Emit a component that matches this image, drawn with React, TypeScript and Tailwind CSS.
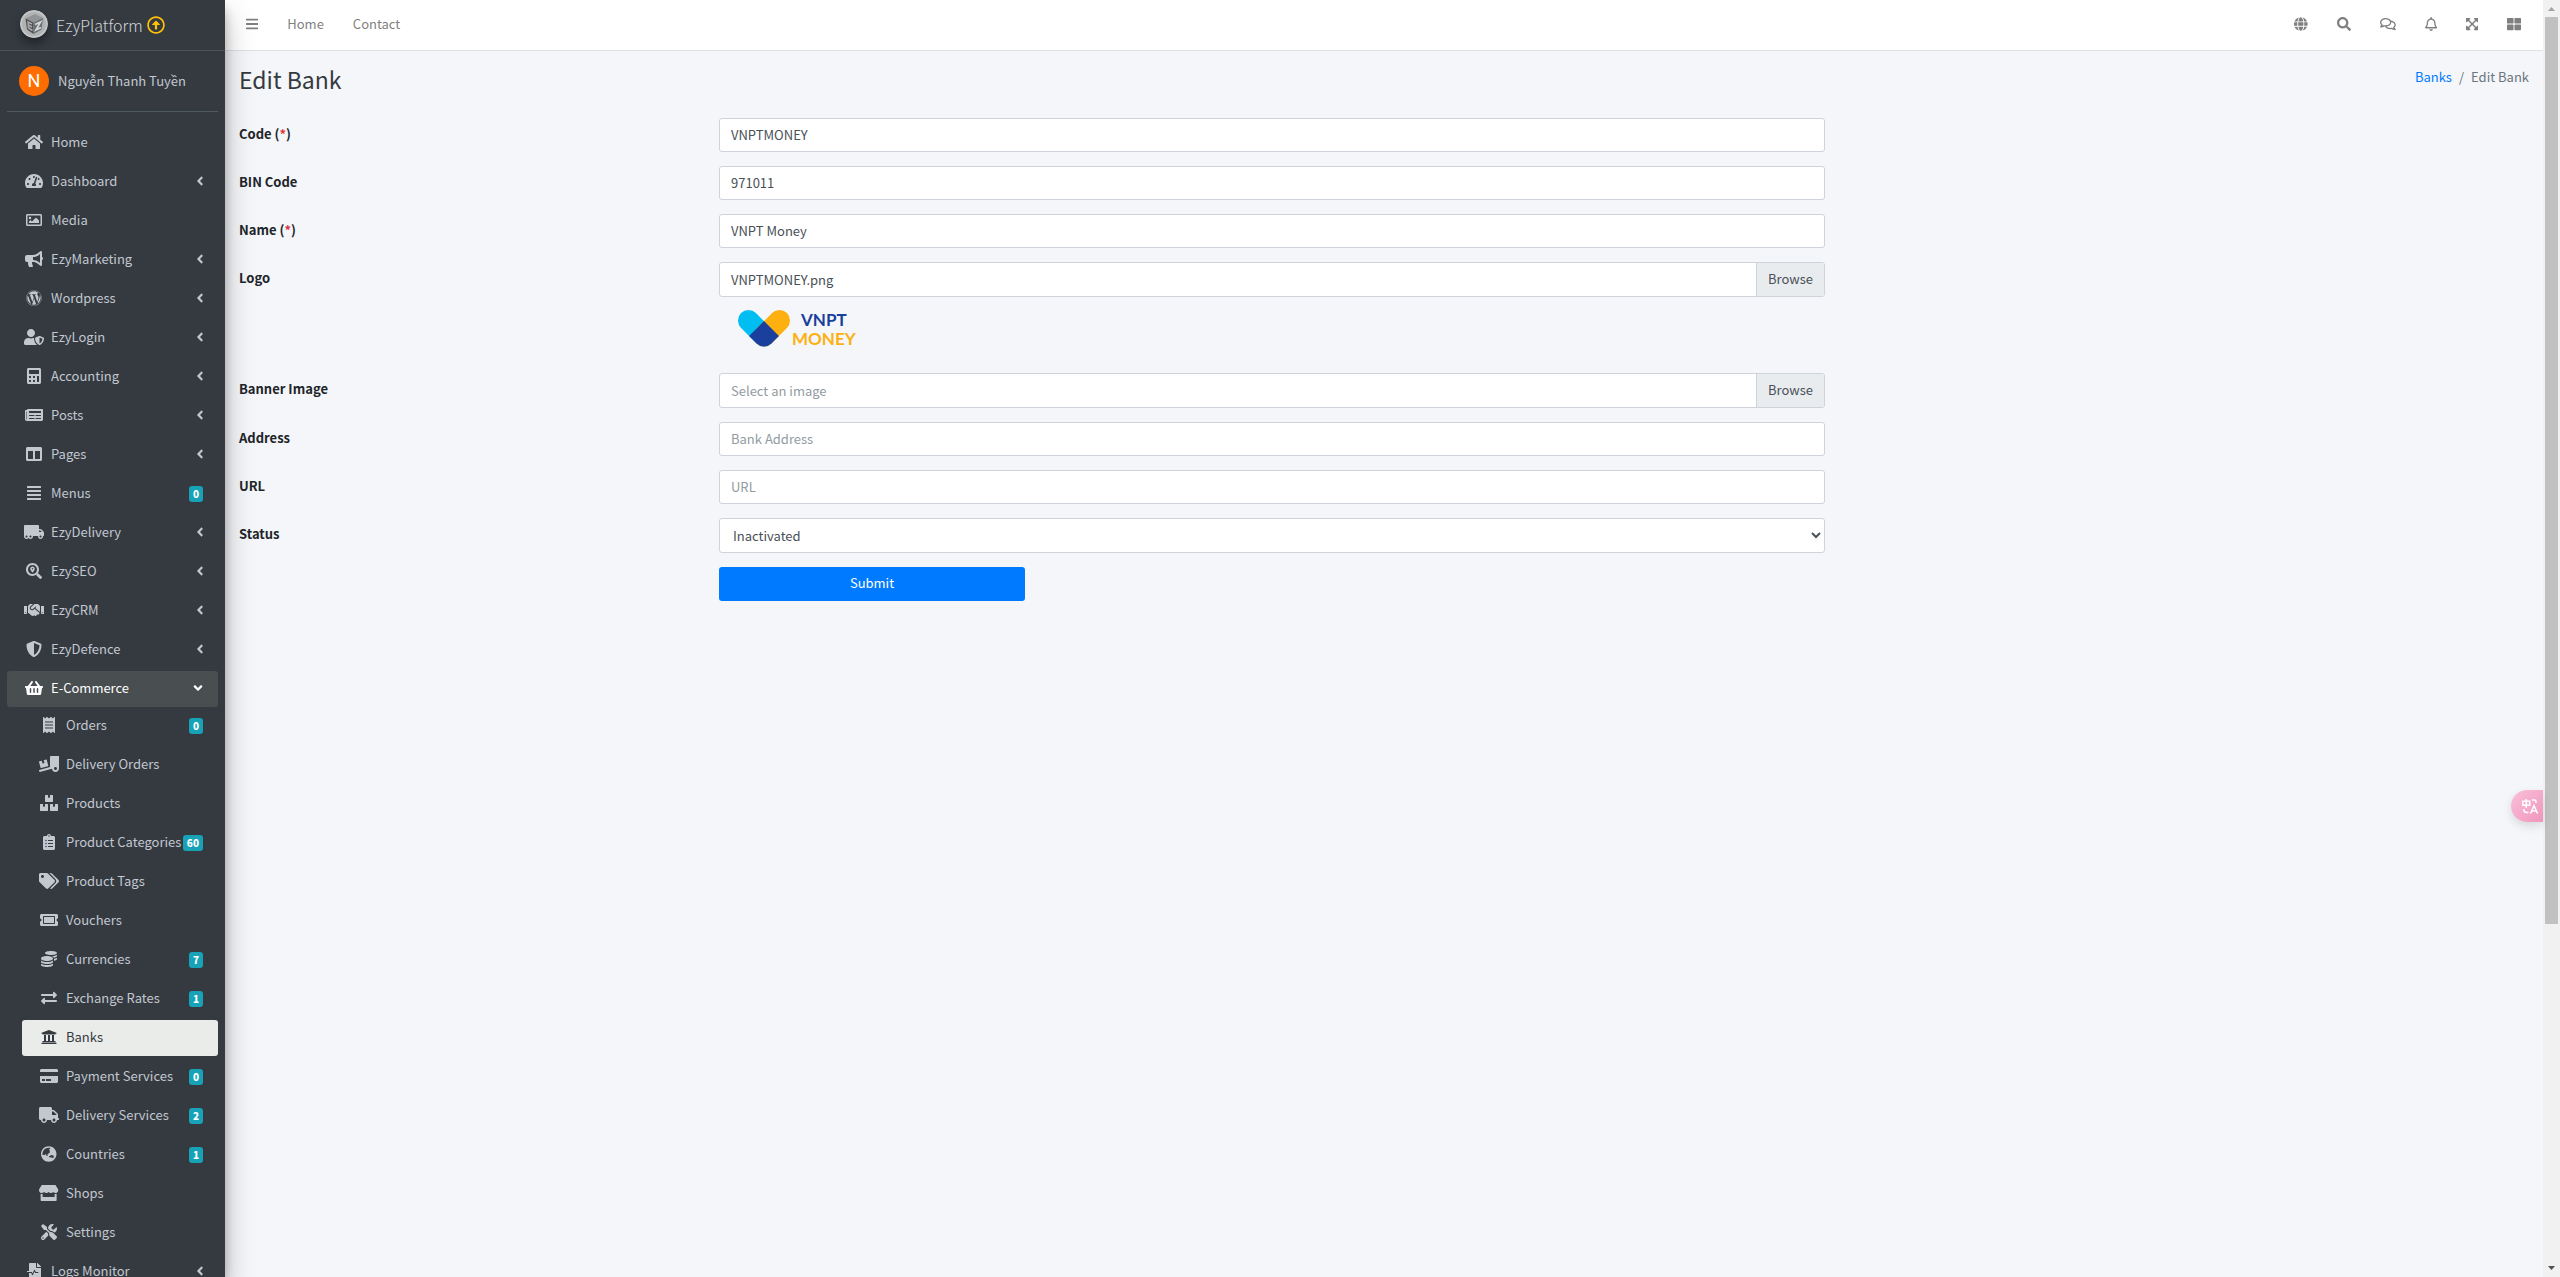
import React, { useState } from 'react';
import type { IconType } from 'react-icons';
import {
  FaAlignJustify,
  FaAngleDown,
  FaAngleLeft,
  FaBars,
  FaBoxes,
  FaBullhorn,
  FaCalculator,
  FaClipboardList,
  FaCoins,
  FaColumns,
  FaCreditCard,
  FaExchangeAlt,
  FaExpandArrowsAlt,
  FaFileMedicalAlt,
  FaGlobe,
  FaGlobeAsia,
  FaHandshake,
  FaHome,
  FaNewspaper,
  FaReceipt,
  FaRegArrowAltCircleUp,
  FaRegBell,
  FaRegComments,
  FaRegImage,
  FaSearch,
  FaSearchLocation,
  FaShieldAlt,
  FaShoppingBasket,
  FaStore,
  FaTachometerAlt,
  FaTags,
  FaThLarge,
  FaTicketAlt,
  FaTools,
  FaTruck,
  FaTruckLoading,
  FaTruckMoving,
  FaUniversity,
  FaUserShield,
  FaWordpress,
} from 'react-icons/fa';

interface NavItem {
  label: string;
  icon: IconType;
  badge?: number;
  expandable?: boolean;
  children?: NavItem[];
}

const NAV: NavItem[] = [
  { label: 'Home', icon: FaHome },
  { label: 'Dashboard', icon: FaTachometerAlt, expandable: true },
  { label: 'Media', icon: FaRegImage },
  { label: 'EzyMarketing', icon: FaBullhorn, expandable: true },
  { label: 'Wordpress', icon: FaWordpress, expandable: true },
  { label: 'EzyLogin', icon: FaUserShield, expandable: true },
  { label: 'Accounting', icon: FaCalculator, expandable: true },
  { label: 'Posts', icon: FaNewspaper, expandable: true },
  { label: 'Pages', icon: FaColumns, expandable: true },
  { label: 'Menus', icon: FaAlignJustify, badge: 0 },
  { label: 'EzyDelivery', icon: FaTruckMoving, expandable: true },
  { label: 'EzySEO', icon: FaSearchLocation, expandable: true },
  { label: 'EzyCRM', icon: FaHandshake, expandable: true },
  { label: 'EzyDefence', icon: FaShieldAlt, expandable: true },
  {
    label: 'E-Commerce',
    icon: FaShoppingBasket,
    children: [
      { label: 'Orders', icon: FaReceipt, badge: 0 },
      { label: 'Delivery Orders', icon: FaTruckLoading },
      { label: 'Products', icon: FaBoxes },
      { label: 'Product Categories', icon: FaClipboardList, badge: 60 },
      { label: 'Product Tags', icon: FaTags },
      { label: 'Vouchers', icon: FaTicketAlt },
      { label: 'Currencies', icon: FaCoins, badge: 7 },
      { label: 'Exchange Rates', icon: FaExchangeAlt, badge: 1 },
      { label: 'Banks', icon: FaUniversity },
      { label: 'Payment Services', icon: FaCreditCard, badge: 0 },
      { label: 'Delivery Services', icon: FaTruck, badge: 2 },
      { label: 'Countries', icon: FaGlobeAsia, badge: 1 },
      { label: 'Shops', icon: FaStore },
      { label: 'Settings', icon: FaTools },
    ],
  },
  { label: 'Logs Monitor', icon: FaFileMedicalAlt, expandable: true },
];

const TOOLS: { label: string; icon: IconType }[] = [
  { label: 'Language', icon: FaGlobe },
  { label: 'Search', icon: FaSearch },
  { label: 'Messages', icon: FaRegComments },
  { label: 'Notifications', icon: FaRegBell },
  { label: 'Fullscreen', icon: FaExpandArrowsAlt },
  { label: 'Apps', icon: FaThLarge },
];

const INPUT =
  'h-[34px] w-full min-w-0 rounded-[3px] border border-[#ced4da] bg-white px-[11px] pb-0.5 text-[#495057] placeholder-[#939ba2] focus:outline-none focus:border-[#80bdff]';

const NavLink = ({ item, active }: { item: NavItem; active?: boolean }) => {
  const Icon = item.icon;
  const open = !!item.children;
  let tone = 'text-[#c2c7d0] hover:bg-white/10';
  if (active) tone = 'bg-[#eaecea] text-[#343a40]';
  if (open) tone = 'bg-[#494e51] text-white';

  return (
    <a href="#" className={`flex h-9 items-center rounded-[3px] pr-[15px] pl-3 ${tone}`}>
      <span className="flex w-[30px] shrink-0 justify-center pb-0.5">
        <Icon size="100%" className="h-4 w-auto shrink-0" />
      </span>
      <span className="ml-0.5 flex-1 pb-0.5 whitespace-nowrap">{item.label}</span>
      {item.expandable && <FaAngleLeft className="-mr-1 mb-0.5 size-[14px]" />}
      {open && <FaAngleDown className="-mr-0.5 mb-0.5 size-[14px]" />}
      {item.badge !== undefined && (
        <span className="flex h-4 items-center rounded-[3px] bg-[#17a2b8] px-1 text-[10px] font-black text-white">
          {item.badge}
        </span>
      )}
    </a>
  );
};

const BrandLogo = () => (
  <svg viewBox="0 0 28 28" className="mb-0.5 size-7 rounded-full shadow-[0_6px_8px_rgba(0,0,0,0.35)]" aria-hidden="true">
    <circle cx="14" cy="14" r="14" fill="#c4c6c7" />
    <circle cx="14" cy="14" r="12" fill="#b0b2b3" />
    <path d="M5.500 8.500 L15 4 L23 8 L13.500 12.500 Z" fill="#929597" />
    <path d="M5.500 8.500 L13.500 12.500 L13.500 24 L7 19.500 Z" fill="#4b4e51" />
    <path d="M13.500 12.500 L23 8 L21.500 19.500 L13.500 24 Z" fill="#6b6e71" />
    <path d="M12 14 L8 12 L8.500 18 L12.500 20.500 M8.300 15 L12 17" fill="none" stroke="#a9abad" strokeWidth="1.500" />
    <path d="M15 14.500 L20.500 12 L16 20 L21 17.500" fill="none" stroke="#d2d4d5" strokeWidth="1.800" />
  </svg>
);

const VnptLogo = () => (
  <svg width="144" height="54" viewBox="0 0 144 54" role="img" aria-label="VNPT Money">
    <g strokeLinecap="round" strokeWidth="21" fill="none">
      <path d="M29.500 19.500 L45 35" stroke="#00bdf2" />
      <path d="M60.500 19.500 L45 35" stroke="#fdb010" />
    </g>
    <path
      d="M45 20 L60 35 L52.400 42.400 A10.500 10.500 0 0 1 37.600 42.400 L30 35 Z"
      fill="#1b3f9c"
    />
    <text x="82" y="25" fontSize="17" fontWeight="700" fill="#1b3f9c" fontFamily="Lato, sans-serif">VNPT</text>
    <text x="73" y="44" fontSize="17" fontWeight="700" fill="#fdb010" fontFamily="Lato, sans-serif">MONEY</text>
  </svg>
);

const Sidebar = () => (
  <aside className="z-20 flex w-[225px] shrink-0 flex-col overflow-hidden bg-[#343a40] shadow-[0_14px_28px_rgba(0,0,0,0.25),0_10px_10px_rgba(0,0,0,0.22)]">
    <a href="#" className="flex h-[51px] shrink-0 items-center border-b border-[#4b545c] pl-5 text-[#d0d4da]">
      <BrandLogo />
      <span className="ml-2 text-base font-light">EzyPlatform</span>
      <FaRegArrowAltCircleUp className="ml-1 size-[18px] text-[#ffc107]" />
    </a>
    <div className="mx-[7px] flex h-[61px] shrink-0 items-center border-b border-[#4f5962] pl-3">
      <span className="flex size-[30px] items-center justify-center rounded-full bg-[#ff6d00] font-['Roboto',sans-serif] text-lg text-white">
        N
      </span>
      <a href="#" className="ml-[9px] text-[#c2c7d0]">Nguyễn Thanh Tuyền</a>
    </div>
    <nav className="mx-[7px] mt-[13px]">
      <ul className="flex flex-col gap-[3px]">
        {NAV.map(item => (
          <li key={item.label}>
            <NavLink item={item} />
            {item.children && (
              <ul className="mt-px flex flex-col gap-[3px] pl-[15px]">
                {item.children.map(child => (
                  <li key={child.label}>
                    <NavLink item={child} active={child.label === 'Banks'} />
                  </li>
                ))}
              </ul>
            )}
          </li>
        ))}
      </ul>
    </nav>
  </aside>
);

const Navbar = () => (
  <header className="flex h-[51px] shrink-0 items-center justify-between border-b border-[#dee2e6] bg-white pr-[22px] pb-0.5 pl-[21px] text-[#7f7f7f]">
    <div className="flex items-center gap-[29px]">
      <button type="button" aria-label="Toggle menu">
        <FaBars size="100%" className="h-[14px] w-auto" />
      </button>
      <a href="#">Home</a>
      <a href="#">Contact</a>
    </div>
    <div className="flex items-center gap-[29px]">
      {TOOLS.map(({ label, icon: Icon }) => (
        <button key={label} type="button" aria-label={label}>
          <Icon size="100%" className="h-[14px] w-auto" />
        </button>
      ))}
    </div>
  </header>
);

interface RowProps {
  id: string;
  label: string;
  required?: boolean;
  children: React.ReactNode;
}

const Row = ({ id, label, required, children }: RowProps) => (
  <div className="flex">
    <label htmlFor={id} className="h-[34px] w-3/12 px-[7px] leading-8 font-bold">
      {label}
      {required && (
        <>
          {' '}(<span className="text-[#dc3545]">*</span>)
        </>
      )}
    </label>
    <div className="w-7/12 px-[7px]">{children}</div>
  </div>
);

interface FileInputProps {
  id: string;
  value: string;
  onChange: (v: string) => void;
}

const FileInput = ({ id, value, onChange }: FileInputProps) => (
  <div className="flex h-[35px] rounded-[3px] border border-[#ced4da] bg-white">
    <input
      id={id}
      value={value}
      placeholder="Select an image"
      onChange={e => onChange(e.target.value)}
      className="min-w-0 flex-1 px-[11px] text-[#495057] placeholder-[#939ba2] focus:outline-none"
    />
    <button type="button" className="rounded-r-[2px] border-l border-[#ced4da] bg-[#e9ecef] px-[11px] pb-0.5 text-[#495057]">
      Browse
    </button>
  </div>
);

const BankForm = () => {
  const [code, setCode] = useState('VNPTMONEY');
  const [bin, setBin] = useState('971011');
  const [name, setName] = useState('VNPT Money');
  const [logo, setLogo] = useState('VNPTMONEY.png');
  const [banner, setBanner] = useState('');
  const [address, setAddress] = useState('');
  const [url, setUrl] = useState('');
  const [status, setStatus] = useState('Inactivated');

  return (
    <form className="flex w-10/12 flex-col gap-[14px]" onSubmit={e => e.preventDefault()}>
      <Row id="code" label="Code" required>
        <input id="code" className={INPUT} value={code} onChange={e => setCode(e.target.value)} />
      </Row>
      <Row id="bin" label="BIN Code">
        <input id="bin" className={INPUT} value={bin} onChange={e => setBin(e.target.value)} />
      </Row>
      <Row id="name" label="Name" required>
        <input id="name" className={INPUT} value={name} onChange={e => setName(e.target.value)} />
      </Row>
      <Row id="logo" label="Logo">
        <FileInput id="logo" value={logo} onChange={setLogo} />
        <div className="my-1 h-[54px]">
          <VnptLogo />
        </div>
      </Row>
      <Row id="banner" label="Banner Image">
        <FileInput id="banner" value={banner} onChange={setBanner} />
      </Row>
      <Row id="address" label="Address">
        <input
          id="address"
          className={INPUT}
          placeholder="Bank Address"
          value={address}
          onChange={e => setAddress(e.target.value)}
        />
      </Row>
      <Row id="url" label="URL">
        <input id="url" className={INPUT} placeholder="URL" value={url} onChange={e => setUrl(e.target.value)} />
      </Row>
      <Row id="status" label="Status">
        <select
          id="status"
          value={status}
          onChange={e => setStatus(e.target.value)}
          className="h-[35px] w-full rounded-[3px] border border-[#ced4da] bg-white pl-[9px] text-[#495057]"
        >
          <option>Inactivated</option>
          <option>Activated</option>
        </select>
      </Row>
      <div className="ml-[25%] w-2/12 px-[7px]">
        <button type="submit" className="h-[34px] w-full rounded-[3px] bg-[#007bff] pb-0.5 text-white hover:bg-[#0069d9]">
          Submit
        </button>
      </div>
    </form>
  );
};

const TranslateTab = () => (
  <button
    type="button"
    aria-label="Translate"
    className="absolute top-[790px] right-0 flex h-8 w-8 items-center justify-end rounded-l-full bg-linear-to-br from-[#f9c0d9] to-[#ef97bd] pr-1 shadow-[0_4px_10px_rgba(0,0,0,0.12)]"
  >
    <svg viewBox="0 0 18 18" className="size-[18px]" fill="none" stroke="#fff" strokeWidth="1.500" aria-hidden="true">
      <path d="M1.800 4.200 H8.800 V8.200 H1.800 Z M5.300 2 V11" />
      <path d="M11 3 H13.500 Q15 3 15 5 V6" />
      <path d="M3 12 V13 Q3 15.500 5.500 15.500 H7.500" />
      <path d="M9.500 16.500 L13 8.500 L16.500 16.500 M10.700 14 H15.300" />
    </svg>
  </button>
);

const ScrollTrack = () => (
  <div className="flex w-[17px] shrink-0 flex-col items-center bg-[#f1f1f1]" aria-hidden="true">
    <svg width="17" height="17" viewBox="0 0 17 17" className="shrink-0">
      <path d="M5 11 L8.500 7 L12 11 Z" fill="#a3a3a3" />
    </svg>
    <div className="w-full flex-1 px-0.5">
      <div className="h-[73%] bg-[#c1c1c1]" />
    </div>
    <svg width="17" height="17" viewBox="0 0 17 17" className="shrink-0">
      <path d="M5 6 L8.500 10 L12 6 Z" fill="#505050" />
    </svg>
  </div>
);

export default function App() {
  return (
    <div className="flex h-screen overflow-hidden bg-[#f4f6f9] font-['Noto_Sans_CJK_SC','Noto_Sans',sans-serif] text-[13px] leading-5 text-[#212529]">
      <Sidebar />
      <div className="relative flex min-w-0 flex-1 flex-col">
        <Navbar />
        <main className="flex-1 px-[7px]">
          <div className="flex h-[67px] justify-between px-[7px] pt-2.5">
            <h1 className="text-[23px] leading-9 font-normal text-[#343a40]">Edit Bank</h1>
            <nav className="flex gap-[7px] pt-1.5 text-[#6c757d]" aria-label="Breadcrumb">
              <a href="#" className="text-[#007bff]">Banks</a>
              <span>/</span>
              <span>Edit Bank</span>
            </nav>
          </div>
          <BankForm />
        </main>
        <TranslateTab />
      </div>
      <ScrollTrack />
    </div>
  );
}
